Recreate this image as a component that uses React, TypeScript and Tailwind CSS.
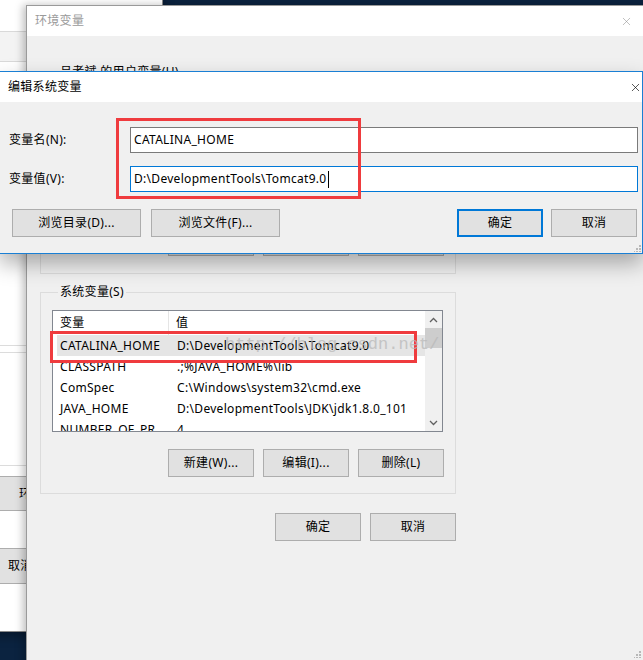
import { X } from "lucide-react";

const rows = [
  { name: "CATALINA_HOME", value: "D:\\DevelopmentTools\\Tomcat9.0", selected: true },
  { name: "CLASSPATH", value: ".;%JAVA_HOME%\\lib" },
  { name: "ComSpec", value: "C:\\Windows\\system32\\cmd.exe" },
  { name: "JAVA_HOME", value: "D:\\DevelopmentTools\\JDK\\jdk1.8.0_101" },
  { name: "NUMBER_OF_PR", value: "4" },
];

const Btn = ({ label, w = "w-[86px]", primary = false }: { label: string; w?: string; primary?: boolean }) => (
  <div
    className={`flex h-[28px] ${w} items-center justify-center bg-[#e1e1e1] ${
      primary ? "border-2 border-[#0078d7]" : "border border-[#adadad]"
    }`}
  >
    {label}
  </div>
);

const Grip = () => (
  <svg width="7" height="7" viewBox="0 0 7 7">
    <rect x="5" y="0" width="2" height="2" fill="#b8b8b8" />
    <rect x="2" y="3" width="2" height="2" fill="#b8b8b8" />
    <rect x="5" y="3" width="2" height="2" fill="#b8b8b8" />
    <rect x="-1" y="6" width="2" height="2" fill="#b8b8b8" />
    <rect x="2" y="6" width="2" height="2" fill="#b8b8b8" />
    <rect x="5" y="6" width="2" height="2" fill="#b8b8b8" />
  </svg>
);

const Chevron = ({ up }: { up?: boolean }) => (
  <svg width="9" height="6" viewBox="0 0 9 6">
    <path d={up ? "M1 5 L4.5 1.5 L8 5" : "M1 1 L4.5 4.5 L8 1"} fill="none" stroke="#606060" strokeWidth="1.3" />
  </svg>
);

const App = () => {
  return (
    <div className="relative h-[660px] w-[643px] overflow-hidden bg-[#0b2340] font-['Noto_Sans','Noto_Sans_CJK_SC',sans-serif] text-[12px] leading-[16px] tracking-[0.3px] text-black">
      {/* window in the back */}
      <div className="absolute left-[-100px] top-[-10px] flex h-[642px] w-[263px] flex-col border-r border-b border-[#8a8a8a] bg-white shadow-[0_4px_10px_rgba(0,0,0,0.35)]">
        <div className="h-[41px]" />
        <div className="h-[31px] border-y border-[#d9d9d9] bg-[#f3f3f3]" />
        <div className="h-[283px]" />
        <div className="h-[8px] border-y border-[#dcdcdc]" />
        <div className="h-[112px]" />
        <div className="h-[11px] border-t border-[#dcdcdc]" />
        <div className="flex h-[35px] items-center border border-[#adadad] bg-[#e1e1e1] pl-[118px]">
          环境变量(N)...
        </div>
        <div className="h-[37px]" />
        <div className="flex h-[36px] items-center border border-[#adadad] bg-[#e1e1e1] pl-[107px]">
          取消
        </div>
      </div>

      {/* 环境变量 */}
      <div className="absolute left-[26px] top-[5px] flex h-[680px] w-[640px] flex-col border border-[#9a9a9a] bg-[#f0f0f0] shadow-[-3px_0_8px_rgba(0,0,0,0.25)]">
        <div className="flex h-[30px] items-center justify-between bg-white pl-[8px] pr-[32px] text-[#9a9a9a]">
          <span>环境变量</span>
          <X size={13} strokeWidth={1} color="#8a8a8a" />
        </div>
        <div className="flex flex-col pl-[13px] pt-[28px]">
          <fieldset className="h-[210px] w-[416px] border border-[#dcdcdc] px-[11px]">
            <legend className="ml-[6px] px-[2px]">吕孝斌 的用户变量(U)</legend>
            <div className="mt-[10px] h-[122px] w-[391px] border border-[#828790] bg-white" />
            <div className="mt-[16px] flex justify-end gap-[9px]">
              <Btn label="新建(N)..." />
              <Btn label="编辑(E)..." />
              <Btn label="删除(D)" />
            </div>
          </fieldset>

          <fieldset className="mt-[10px] w-[416px] border border-[#dcdcdc] px-[11px] pb-[16px]">
            <legend className="ml-[6px] px-[2px]">系统变量(S)</legend>
            <div className="mt-[10px] flex h-[122px] w-[391px] border border-[#828790] bg-white">
              <div className="flex-1 overflow-hidden">
                <div className="flex h-[24px] items-center">
                  <div className="flex h-full w-[116px] items-center border-r border-[#e5e5e5] pl-[7px]">变量</div>
                  <div className="pl-[7px]">值</div>
                </div>
                {rows.map((r) => (
                  <div key={r.name} className="flex h-[21px] items-center">
                    <div className={`ml-[4px] flex h-full flex-1 items-center ${r.selected ? "bg-[#e5e5e5]" : ""}`}>
                      <div className="w-[113px] shrink-0 pl-[3px]">{r.name}</div>
                      <div className="whitespace-nowrap pl-[7px]">{r.value}</div>
                    </div>
                  </div>
                ))}
              </div>
              <div className="flex w-[17px] flex-col bg-[#f0f0f0]">
                <div className="flex h-[17px] items-center justify-center">
                  <Chevron up />
                </div>
                <div className="h-[20px] bg-[#cdcdcd]" />
                <div className="flex-1" />
                <div className="flex h-[17px] items-center justify-center">
                  <Chevron />
                </div>
              </div>
            </div>
            <div className="mt-[17px] flex justify-end gap-[9px]">
              <Btn label="新建(W)..." />
              <Btn label="编辑(I)..." />
              <Btn label="删除(L)" />
            </div>
          </fieldset>

          <div className="mt-[19px] flex w-[416px] justify-end gap-[9px]">
            <Btn label="确定" />
            <Btn label="取消" />
          </div>
        </div>
      </div>
      <div className="absolute left-[634px] top-[651px]">
        <Grip />
      </div>

      {/* 编辑系统变量 */}
      <div className="absolute left-[-1px] top-[71px] flex h-[183px] w-[644px] flex-col border border-[#1a7fd4] bg-[#f0f0f0] shadow-[0_10px_20px_rgba(0,0,0,0.3)]">
        <div className="flex h-[30px] items-center justify-between bg-white pl-[8px]">
          <span>编辑系统变量</span>
          <X size={13} strokeWidth={1.2} color="#000" />
        </div>
        <div className="flex flex-col pl-[9px] pt-[25px]">
          <div className="flex items-center">
            <label className="w-[121px]">变量名(N):</label>
            <div className="flex h-[26px] w-[508px] items-center border border-[#7a7a7a] bg-white pl-[3px]">
              CATALINA_HOME
            </div>
          </div>
          <div className="mt-[13px] flex items-center">
            <label className="w-[121px]">变量值(V):</label>
            <div className="flex h-[26px] w-[508px] items-center border border-[#0078d7] bg-white pl-[3px]">
              D:\DevelopmentTools\Tomcat9.0
              <span className="ml-[1px] h-[17px] border-l border-black" />
            </div>
          </div>
          <div className="mt-[17px] flex items-center pl-[3px] pr-[5px]">
            <Btn label="浏览目录(D)..." w="w-[129px]" />
            <div className="ml-[10px]">
              <Btn label="浏览文件(F)..." w="w-[129px]" />
            </div>
            <div className="flex-1" />
            <Btn label="确定" primary />
            <div className="ml-[8px]">
              <Btn label="取消" />
            </div>
          </div>
        </div>
        <div className="absolute bottom-[1px] right-[1px]">
          <Grip />
        </div>
      </div>

      {/* annotations */}
      <div className="absolute left-[116px] top-[118px] h-[81px] w-[245px] border-[3px] border-[#ef3b3e]" />
      <div className="absolute left-[50px] top-[331px] h-[32px] w-[367px] border-[3px] border-[#ef3b3e]" />
      <div className="pointer-events-none absolute left-[225px] top-[334px] font-['Liberation_Mono',monospace] text-[17px] leading-[22px] tracking-normal text-[#b9b9b9] opacity-75">
        http://blog.csdn.net/
      </div>
    </div>
  );
};

export default App;
